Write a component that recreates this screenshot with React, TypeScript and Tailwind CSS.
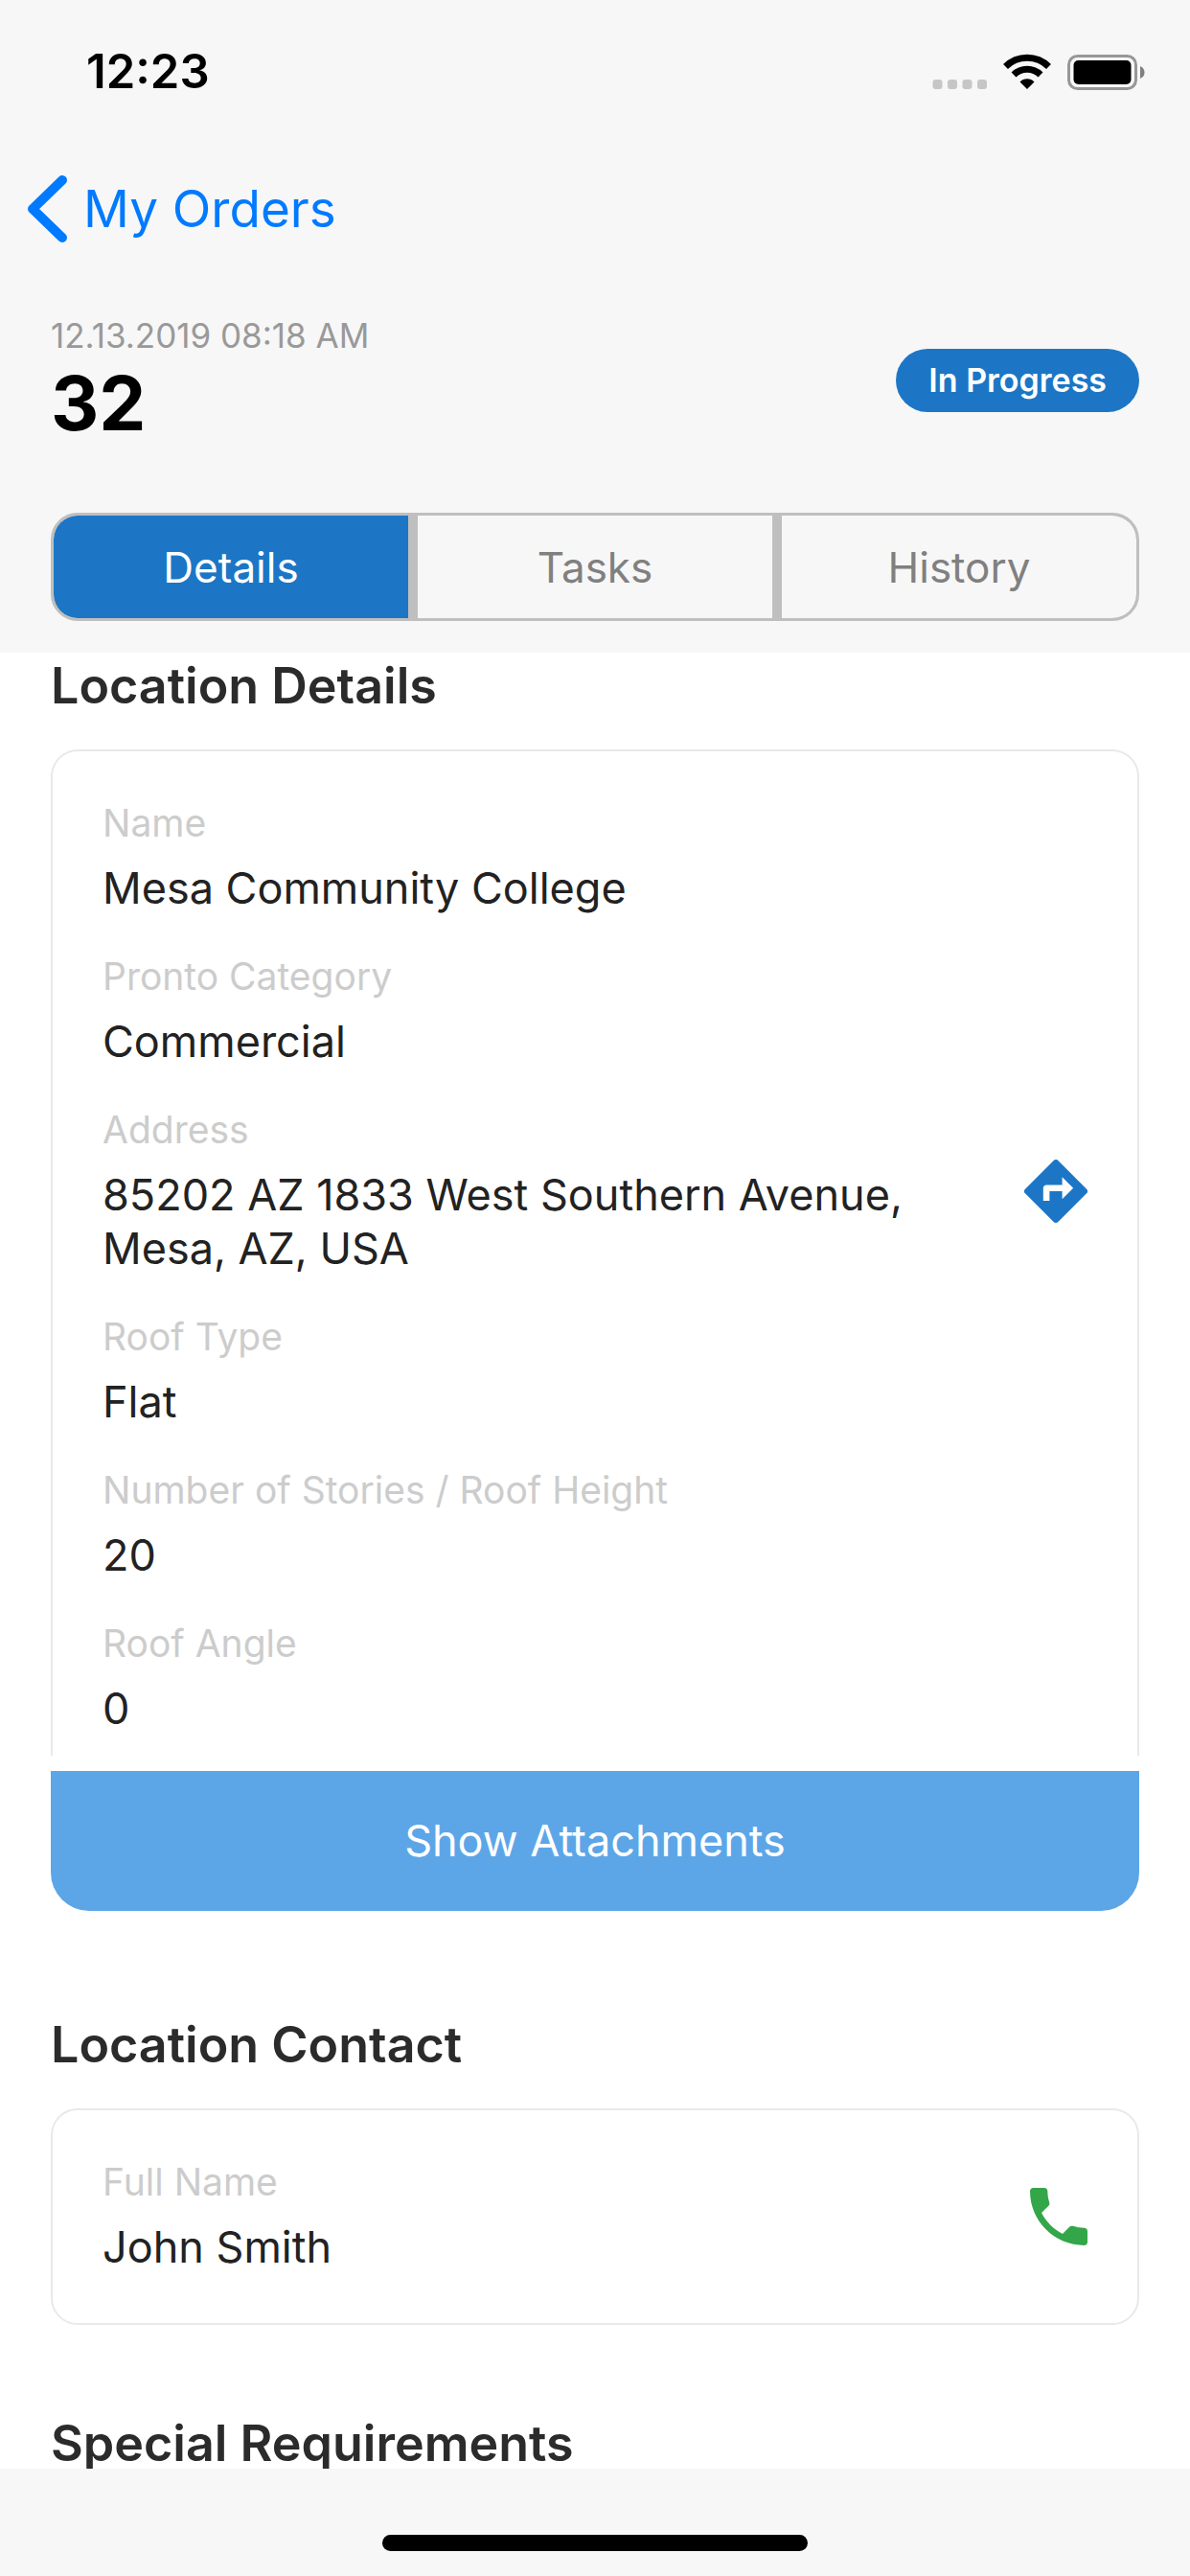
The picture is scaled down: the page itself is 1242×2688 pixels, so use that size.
import { useState } from 'react';
import clsx from 'clsx';

const tabs = ['Details', 'Tasks', 'History'];

const locationFields = [
  { label: 'Name', value: 'Mesa Community College' },
  { label: 'Pronto Category', value: 'Commercial' },
  { label: 'Address', value: '85202 AZ 1833 West Southern Avenue, Mesa, AZ, USA', directions: true },
  { label: 'Roof Type', value: 'Flat' },
  { label: 'Number of Stories / Roof Height', value: '20' },
  { label: 'Roof Angle', value: '0' },
];

export default function App() {
  const [activeTab, setActiveTab] = useState('Details');

  return (
    <div className="h-screen flex flex-col bg-white font-['Inter',sans-serif]">
      <header className="shrink-0 bg-[#f7f7f7] pb-[33px]">
        <StatusBar />
        <nav className="h-[136px] flex items-center pl-7">
          <a href="#orders" className="flex items-center gap-4 text-[53px] leading-[64px] text-[#007aff]">
            <BackIcon />
            My Orders
          </a>
        </nav>

        <div className="px-[53px] pt-10">
          <div className="flex items-center justify-between">
            <div>
              <p className="text-[35px] leading-[48px] text-[#999]">12.13.2019 08:18 AM</p>
              <h1 className="text-[78px] leading-[94px] font-bold text-black">32</h1>
            </div>
            <span className="rounded-full bg-[#1c76c5] px-[34px] text-[34px] leading-[66px] font-semibold text-white">
              In Progress
            </span>
          </div>

          <div className="mt-[67px] h-[113px] grid grid-cols-3 gap-[10px] overflow-hidden rounded-[28px] border-3 border-[#bfbfbf] bg-[#bfbfbf]">
            {tabs.map((tab) => (
              <button
                key={tab}
                type="button"
                onClick={() => setActiveTab(tab)}
                className={clsx(
                  'text-[44px] leading-[56px]',
                  tab === activeTab ? 'bg-[#1c76c5] text-white' : 'bg-[#f7f7f7] text-[#808080]',
                  tab === 'Details' && 'rounded-l-[25px]',
                  tab === 'History' && 'rounded-r-[25px]',
                )}
              >
                {tab}
              </button>
            ))}
          </div>
        </div>
      </header>

      <main className="flex-1 min-h-0 overflow-y-auto [scrollbar-width:none] px-[53px] pt-[5px]">
        <section>
          <SectionTitle>Location Details</SectionTitle>
          <dl className="mt-9 flex flex-col gap-10 rounded-t-[28px] border-2 border-b-0 border-[#e9e9e9] px-[52px] pt-[51px] pb-[21px]">
            {locationFields.map((field) => (
              <div key={field.label} className="flex items-center justify-between">
                <Field label={field.label} value={field.value} />
                {field.directions && (
                  <a href="#directions" aria-label="Directions" className="shrink-0">
                    <DirectionsIcon />
                  </a>
                )}
              </div>
            ))}
          </dl>
          <button
            type="button"
            className="mt-4 h-[146px] w-full rounded-b-[40px] bg-[#5ca6e8] text-[45px] leading-[56px] text-white"
          >
            Show Attachments
          </button>
        </section>

        <section className="mt-[110px]">
          <SectionTitle>Location Contact</SectionTitle>
          <dl className="mt-9 flex items-center justify-between rounded-[28px] border-2 border-[#e9e9e9] px-[52px] py-[51px]">
            <Field label="Full Name" value="John Smith" />
            <a href="#call" aria-label="Call" className="shrink-0">
              <PhoneIcon />
            </a>
          </dl>
        </section>

        <section className="mt-[94px]">
          <SectionTitle>Special Requirements</SectionTitle>
        </section>
      </main>

      <footer className="shrink-0 h-28 bg-[#f7f7f7] flex justify-center items-end pb-[26px]">
        <div className="h-[17px] w-[444px] rounded-full bg-black" />
      </footer>
    </div>
  );
}

function SectionTitle({ children }: { children: string }) {
  return <h2 className="text-[52px] leading-[60px] font-semibold text-[#2b2b2b]">{children}</h2>;
}

function Field({ label, value }: { label: string; value: string }) {
  return (
    <div className="max-w-[880px]">
      <dt className="text-[39px] leading-[48px] text-[#ccc]">{label}</dt>
      <dd className="mt-4 text-[45px] leading-[56px] text-[#222]">{value}</dd>
    </div>
  );
}

function StatusBar() {
  return (
    <div className="h-[150px] flex items-center justify-between pl-[90px] pr-[47px]">
      <span className="text-[49px] leading-[56px] font-semibold text-black">12:23</span>
      <svg width="222" height="38" viewBox="0 0 222 38" aria-hidden="true">
        <g fill="#c6c6c6">
          <rect x="0.5" y="27" width="10" height="10" rx="3" />
          <rect x="16" y="27" width="10" height="10" rx="3" />
          <rect x="31.5" y="27" width="10" height="10" rx="3" />
          <rect x="47" y="27" width="10" height="10" rx="3" />
        </g>
        <g fill="none" stroke="#000" strokeWidth="7">
          <path d="M76.5 13.5 A32 32 0 0 1 121.5 13.5" />
          <path d="M85 22 A20 20 0 0 1 113 22" />
        </g>
        <path d="M99 37 L91.5 29.5 A10.5 10.5 0 0 1 106.5 29.5 Z" fill="#000" />
        <rect x="142.5" y="2.500" width="70" height="34" rx="9" fill="none" stroke="#979797" strokeWidth="3" />
        <rect x="147.500" y="7" width="60" height="25" rx="5" fill="#000" />
        <path d="M217 13 Q221.5 15 221.5 19.5 Q221.5 24 217 26 Z" fill="#808080" />
      </svg>
    </div>
  );
}

function BackIcon() {
  return (
    <svg width="43" height="70" viewBox="0 0 43 70" fill="none" aria-hidden="true">
      <path d="M37 5 L6 35 L37 65" stroke="currentColor" strokeWidth="10" strokeLinecap="round" strokeLinejoin="round" />
    </svg>
  );
}

function DirectionsIcon() {
  return (
    <svg width="66" height="66" viewBox="2 2 20 20" fill="#1c76c5" aria-hidden="true">
      <path d="M21.71 11.29l-9-9a.996.996 0 0 0-1.41 0l-9 9a.996.996 0 0 0 0 1.41l9 9c.39.39 1.02.39 1.41 0l9-9a.996.996 0 0 0 0-1.41zM14 14.5V12h-4v3H8v-4c0-.55.45-1 1-1h5V7.5l3.5 3.5-3.5 3.5z" />
    </svg>
  );
}

function PhoneIcon() {
  return (
    <svg width="60" height="60" viewBox="3 3 18 18" fill="#34a64a" aria-hidden="true">
      <path d="M6.62 10.79c1.44 2.83 3.76 5.14 6.59 6.59l2.2-2.2c.27-.27.67-.36 1.02-.24 1.12.37 2.33.57 3.57.57.55 0 1 .45 1 1V20c0 .55-.45 1-1 1-9.39 0-17-7.61-17-17 0-.55.45-1 1-1h3.5c.55 0 1 .45 1 1 0 1.25.2 2.45.57 3.57.11.35.03.74-.25 1.02l-2.2 2.2z" />
    </svg>
  );
}
